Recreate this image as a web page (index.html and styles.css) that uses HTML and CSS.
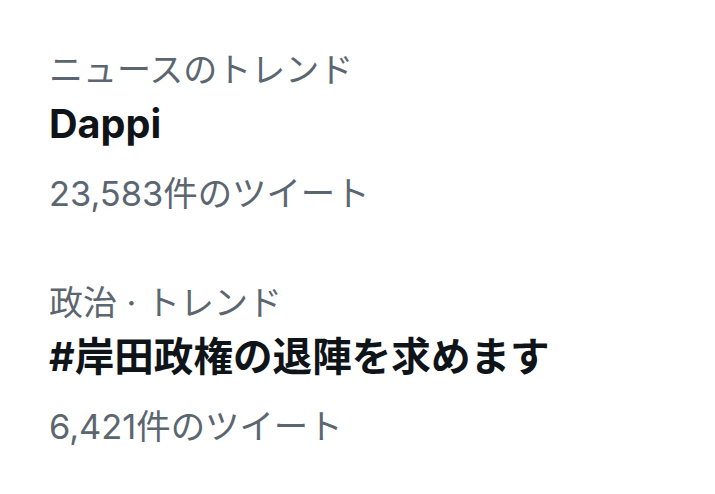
FILE: index.html
```html
<!DOCTYPE html>
<html lang="ja">
<head>
    <meta charset="UTF-8">
    <meta name="viewport" content="width=device-width, initial-scale=1.0">
    <title>トレンド</title>
    <link rel="stylesheet" href="styles.css">
</head>
<body>
    <div class="trends">
        <div class="trend">
            <div class="trend-label">ニュースのトレンド</div>
            <div class="trend-title">Dappi</div>
            <div class="trend-count">23,583件のツイート</div>
        </div>
        <div class="trend">
            <div class="trend-label">政治 · トレンド</div>
            <div class="trend-title">#岸田政権の退陣を求めます</div>
            <div class="trend-count">6,421件のツイート</div>
        </div>
    </div>
</body>
</html>
```

FILE: styles.css
```css
body {
    margin: 0;
    background-color: #fff;
    font-family: "Inter", "Noto Sans CJK JP", sans-serif;
}

.trends {
    display: flex;
    flex-direction: column;
    gap: 69px;
    padding: 50px 0 0 49px;
}

.trend-label {
    font-size: 34px;
    line-height: 40px;
    color: #5b6670;
}

.trend-title {
    margin-top: 9px;
    font-size: 39.6px;
    line-height: 50px;
    font-weight: bold;
    color: #0f1419;
}

.trend-count {
    margin-top: 25px;
    font-size: 34.4px;
    line-height: 40px;
    color: #5b6670;
}
```
